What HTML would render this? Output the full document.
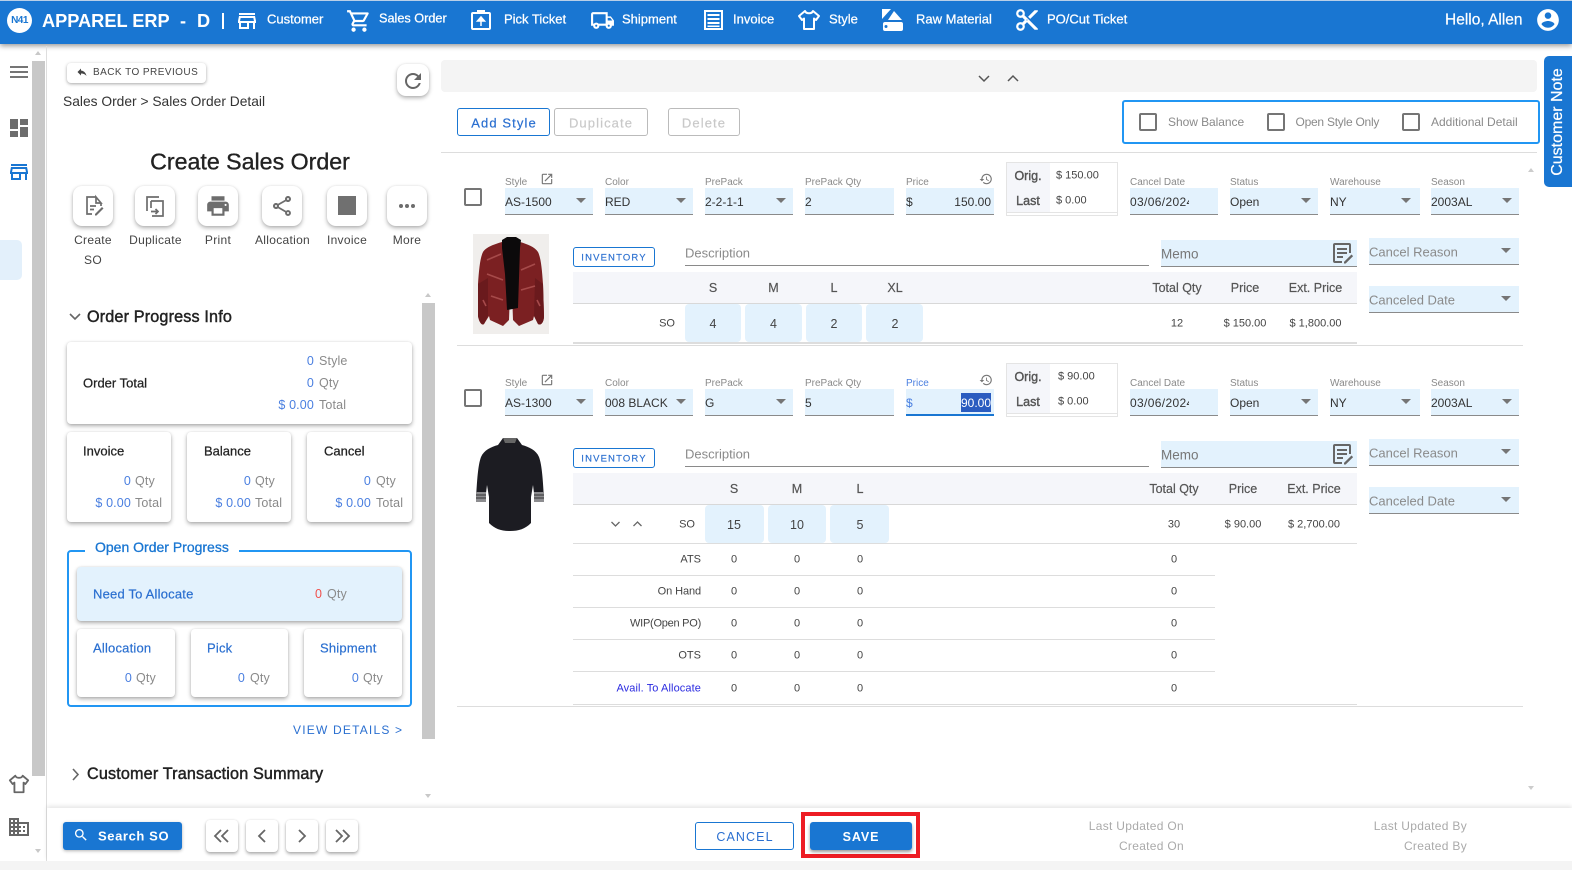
<!DOCTYPE html>
<html><head><meta charset="utf-8"><title>Apparel ERP</title>
<style>
html,body{margin:0;padding:0;background:#fff}
#p{position:relative;width:1572px;height:870px;overflow:hidden;background:#fff;font-family:"Liberation Sans",sans-serif;color:#333}
#p div,#p svg,#p span{position:absolute;box-sizing:border-box}
.t,.r,.c{white-space:nowrap;line-height:1}
.t{transform:translateY(-50%)}
.r{transform:translate(-100%,-50%)}
.c{transform:translate(-50%,-50%)}
.nav{color:#fff;font-size:13px;top:18.5px;-webkit-text-stroke:.25px #fff}
.card{background:#fff;border-radius:4px;box-shadow:0 2px 4px rgba(0,0,0,.32),0 0 2px rgba(0,0,0,.08)}
.ib{background:#fff;border-radius:9px;box-shadow:0 2px 4px rgba(0,0,0,.3),0 0 2px rgba(0,0,0,.08);top:186px;width:40px;height:40px}
.lb{font-size:12px;color:#444;letter-spacing:.3px}
.h1{font-size:16.2px;letter-spacing:.15px;color:#222;-webkit-text-stroke:.45px #222;margin-top:2px}
.b{color:#4a7fe0;font-size:12.5px;letter-spacing:.15px;margin-top:1px}
.g{color:#8a8a8a;font-size:12.5px;letter-spacing:.15px;margin-top:1px}
.bt{font-size:13px;color:#222;-webkit-text-stroke:.25px #222;margin-top:.5px}
.bl{font-size:13px;letter-spacing:.2px;color:#2a6fd0;-webkit-text-stroke:.2px #2a6fd0;margin-top:1px}
.f{background:#e3f2fd;border-bottom:1px solid #8a8a8a;height:27px}
.sl{font-size:10px;color:#8a8a8a;margin-top:1px}
.v{font-size:12px;color:#333}
.car{width:0;height:0;border-left:5.5px solid transparent;border-right:5.5px solid transparent;border-top:5.5px solid #757575}
.cb{width:18px;height:18px;border:2px solid #757575;border-radius:2px;background:#fff}
.cl{font-size:12px;color:#8a8a8a}
.th{background:#f5f6fa;border-bottom:1px solid #d8d8d8;left:573px;width:784px;height:32px}
.hd{font-size:12.5px;color:#555;-webkit-text-stroke:.2px #555}
.o{-webkit-text-stroke:.4px #555}
.cell{background:#e3f2fd;border-radius:4px}
.s{font-size:11px;color:#444;margin-top:1.5px}
.n{font-size:12.5px;color:#444}
.ln{background:#ddd;height:1px}
.ph{font-size:13px;color:#8a8a8a}
.nb{top:820px;width:32px;height:32px;background:#fff;border-radius:4px;box-shadow:0 2px 3px rgba(0,0,0,.3),0 0 2px rgba(0,0,0,.1)}
.ft{font-size:12px;color:#aaa;letter-spacing:.3px}
.btn{border-radius:3px;background:#fff;height:28px;top:108px;font-size:13px}
.dt{left:0;top:1px;white-space:nowrap;line-height:1;letter-spacing:.35px}
svg{overflow:visible}
</style></head><body>
<div id="p">
<svg width="0" height="0" style="left:0;top:0"><defs>
<symbol id="store" viewBox="0 0 24 24"><path d="M18.36 9l.6 3H5.04l.6-3h12.72M20 4H4v2h16V4zm0 3H4l-1 5v2h1v6h10v-6h4v6h2v-6h1v-2l-1-5zM6 18v-4h6v4H6z"/></symbol>
<symbol id="ext" viewBox="0 0 24 24"><path d="M19 19H5V5h7V3H5c-1.11 0-2 .9-2 2v14c0 1.1.89 2 2 2h14c1.1 0 2-.9 2-2v-7h-2v7zM14 3v2h3.59l-9.83 9.83 1.41 1.41L19 6.41V10h2V3h-7z"/></symbol>
<symbol id="hist" viewBox="0 0 24 24"><path d="M13 3c-4.97 0-9 4.03-9 9H1l3.89 3.89.07.14L9 12H6c0-3.87 3.13-7 7-7s7 3.13 7 7-3.13 7-7 7c-1.93 0-3.68-.79-4.94-2.06l-1.42 1.42C8.27 19.99 10.51 21 13 21c4.97 0 9-4.03 9-9s-4.03-9-9-9zm-1 5v5l4.28 2.54.72-1.21-3.5-2.08V8H12z"/></symbol>
<symbol id="note" viewBox="0 0 24 24"><path d="M5 2h14a2 2 0 0 1 2 2v8h-2V4H5v16h7v2H5a2 2 0 0 1-2-2V4a2 2 0 0 1 2-2zM7 7h10v2H7zM7 11h10v2H7zM7 15h6v2H7zM21.5 13.5l1.6 1.6-7.4 7.4H14v-1.6z"/></symbol>
<symbol id="shirt" viewBox="0 0 24 24"><path fill="none" stroke-width="2" stroke-linejoin="round" d="M8 3 L2 8 L5 12 L7 10.5 V21 H17 V10.5 L19 12 L22 8 L16 3 C15 6 9 6 8 3 Z"/></symbol>
</defs></svg>

<!-- header -->
<div style="left:0;top:0;width:1572px;height:44px;background:#1976d2;border-top:1px solid #b9cfe8;box-shadow:0 2px 5px rgba(0,0,0,.4)"></div>
<div style="left:7px;top:8px;width:25px;height:25px;border-radius:50%;background:#fff"></div>
<span class="c" style="left:19.5px;top:20.5px;font-size:10px;font-weight:700;color:#1976d2;letter-spacing:-.5px">N41</span>
<span class="t" style="left:42px;top:20.5px;font-size:18.2px;font-weight:700;color:#fff">APPAREL ERP</span>
<span class="t" style="left:180px;top:20.5px;font-size:18.2px;font-weight:700;color:#fff">-</span>
<span class="t" style="left:197px;top:20.5px;font-size:18.2px;font-weight:700;color:#fff">D</span>
<div style="left:221.5px;top:13px;width:2px;height:16px;background:#fff"></div>
<svg style="left:235px;top:9px" width="24" height="24" fill="#fff"><use href="#store"/></svg>
<span class="t nav" style="left:267px">Customer</span>
<svg style="left:346px;top:8px" width="26" height="26" viewBox="0 0 24 24" fill="#fff"><path d="M15.55 13c.75 0 1.41-.41 1.75-1.03l3.58-6.49c.37-.66-.11-1.48-.87-1.48H5.21l-.94-2H1v2h2l3.6 7.59-1.35 2.44C4.52 15.37 5.48 17 7 17h12v-2H7l1.1-2h7.45zM6.16 6h12.15l-2.76 5H8.53L6.16 6zM7 18c-1.1 0-1.99.9-1.99 2S5.9 22 7 22s2-.9 2-2-.9-2-2-2zm10 0c-1.1 0-1.99.9-1.99 2s.89 2 1.99 2 2-.9 2-2-.9-2-2-2z"/></svg>
<span class="t nav" style="left:379px;font-size:12.7px">Sales Order</span>
<svg style="left:471px;top:9px" width="20" height="21" viewBox="0 0 20 21" fill="none" stroke="#fff" stroke-width="2"><rect x="1" y="4" width="18" height="16" rx="1"/><path d="M7 4V2h6v2" /><path d="M10 17v-7M6.5 12L10 8l3.5 4z" fill="#fff" stroke-width="1.5"/></svg>
<span class="t nav" style="left:504px">Pick Ticket</span>
<svg style="left:590px;top:8px" width="25" height="25" viewBox="0 0 24 24" fill="#fff"><path d="M20 8h-3V4H3c-1.1 0-2 .9-2 2v11h2c0 1.66 1.34 3 3 3s3-1.34 3-3h6c0 1.66 1.34 3 3 3s3-1.34 3-3h2v-5l-3-4zm-.5 1.5l1.96 2.5H17V9.5h2.5zM6 18c-.55 0-1-.45-1-1s.45-1 1-1 1 .45 1 1-.45 1-1 1zm2.22-3c-.55-.61-1.33-1-2.22-1s-1.67.39-2.22 1H3V6h12v9H8.22zM18 18c-.55 0-1-.45-1-1s.45-1 1-1 1 .45 1 1-.45 1-1 1z"/></svg>
<span class="t nav" style="left:622px">Shipment</span>
<svg style="left:704px;top:10px" width="19" height="20" viewBox="0 0 19 20" fill="#fff"><path d="M0 0h19v20H0zM2 2v16h15V2z" fill-rule="evenodd"/><rect x="3.5" y="4" width="12" height="2"/><rect x="3.5" y="8" width="12" height="2"/><rect x="3.5" y="12" width="12" height="2"/><rect x="3.5" y="15.5" width="12" height="1.5"/></svg>
<span class="t nav" style="left:733px">Invoice</span>
<svg style="left:797px;top:8px" width="24" height="24" stroke="#fff"><use href="#shirt"/></svg>
<span class="t nav" style="left:829px">Style</span>
<svg style="left:882px;top:9px" width="21" height="22" viewBox="0 0 21 22" fill="#fff"><path d="M0 0h9L0 10z"/><path d="M12 2l8 9H6z"/><path d="M3 13h16a2 2 0 0 1 2 2v5a2 2 0 0 1-2 2H3a2 2 0 0 1-2-2v-5a2 2 0 0 1 2-2zm1 3a1.5 1.5 0 1 0 0 3 1.5 1.5 0 0 0 0-3z" fill-rule="evenodd"/></svg>
<span class="t nav" style="left:916px">Raw Material</span>
<svg style="left:1014px;top:7px" width="26" height="26" viewBox="0 0 24 24" fill="#fff"><path d="M9.64 7.64c.23-.5.36-1.05.36-1.64 0-2.21-1.79-4-4-4S2 3.79 2 6s1.79 4 4 4c.59 0 1.14-.13 1.64-.36L10 12l-2.36 2.36C7.14 14.13 6.59 14 6 14c-2.21 0-4 1.79-4 4s1.79 4 4 4 4-1.79 4-4c0-.59-.13-1.14-.36-1.64L12 14l7 7h3v-1L9.64 7.64zM6 8c-1.1 0-2-.89-2-2s.9-2 2-2 2 .89 2 2-.9 2-2 2zm0 12c-1.1 0-2-.89-2-2s.9-2 2-2 2 .89 2 2-.9 2-2 2zm6-7.5c-.28 0-.5-.22-.5-.5s.22-.5.5-.5.5.22.5.5-.22.5-.5.5zM19 3l-6 6 2 2 7-7V3h-3z"/></svg>
<span class="t nav" style="left:1047px">PO/Cut Ticket</span>
<span class="t" style="left:1445px;top:20px;font-size:15.5px;color:#fff;-webkit-text-stroke:.2px #fff">Hello, Allen</span>
<svg style="left:1535px;top:7px" width="26" height="26" viewBox="0 0 24 24" fill="#fff"><path d="M12 2C6.48 2 2 6.48 2 12s4.48 10 10 10 10-4.48 10-10S17.52 2 12 2zm0 3c1.66 0 3 1.34 3 3s-1.34 3-3 3-3-1.34-3-3 1.34-3 3-3zm0 14.2c-2.5 0-4.71-1.28-6-3.22.03-1.99 4-3.08 6-3.08 1.99 0 5.97 1.09 6 3.08-1.29 1.94-3.5 3.22-6 3.22z"/></svg>

<!-- left rail -->
<div style="left:32px;top:61px;width:13px;height:715px;background:#c8c8c8"></div>
<div style="left:46px;top:46px;width:1px;height:815px;background:#dedede"></div>
<div style="left:35px;top:51px;width:0;height:0;border-left:3.5px solid transparent;border-right:3.5px solid transparent;border-bottom:4px solid #c8c8c8"></div>
<div style="left:35px;top:849px;width:0;height:0;border-left:3.5px solid transparent;border-right:3.5px solid transparent;border-top:4px solid #c8c8c8"></div>
<div style="left:10px;top:66px;width:18px;height:2px;background:#757575"></div>
<div style="left:10px;top:71px;width:18px;height:2px;background:#757575"></div>
<div style="left:10px;top:76px;width:18px;height:2px;background:#757575"></div>
<svg style="left:7px;top:116px" width="24" height="24" viewBox="0 0 24 24" fill="#6d6d6d"><path d="M3 13h8V3H3v10zm0 8h8v-6H3v6zm10 0h8V11h-8v10zm0-18v6h8V3h-8z"/></svg>
<svg style="left:7px;top:160px" width="24" height="24" fill="#1976d2"><use href="#store"/></svg>
<div style="left:0;top:240px;width:22px;height:40px;background:#e3f0fb;border-radius:0 5px 5px 0"></div>
<svg style="left:8px;top:773px" width="22" height="22" stroke="#666"><use href="#shirt"/></svg>
<svg style="left:7px;top:815px" width="24" height="24" viewBox="0 0 24 24" fill="#666"><path d="M12 7V3H2v18h20V7H12zM6 19H4v-2h2v2zm0-4H4v-2h2v2zm0-4H4V9h2v2zm0-4H4V5h2v2zm4 12H8v-2h2v2zm0-4H8v-2h2v2zm0-4H8V9h2v2zm0-4H8V5h2v2zm10 12h-8v-2h2v-2h-2v-2h2v-2h-2V9h8v10zm-2-8h-2v2h2v-2zm0 4h-2v2h2v-2z"/></svg>

<!-- left panel top -->
<div style="left:67px;top:63px;width:139px;height:20px;background:#fff;border-radius:4px;box-shadow:0 1px 3px rgba(0,0,0,.35)"></div>
<svg style="left:76px;top:66px" width="12" height="12" viewBox="0 0 24 24" fill="#444"><path d="M10 9V5l-7 7 7 7v-4.1c5 0 8.5 1.6 11 5.1-1-5-4-10-11-11z"/></svg>
<span class="t" style="left:93px;top:73px;font-size:10px;letter-spacing:.45px;color:#444">BACK TO PREVIOUS</span>
<div class="ib" style="left:397px;top:64px;width:32px;height:32px"></div>
<svg style="left:401px;top:68.5px" width="24" height="24" viewBox="0 0 24 24" fill="#666"><path d="M17.65 6.35C16.2 4.9 14.21 4 12 4c-4.42 0-7.99 3.58-7.99 8s3.57 8 7.99 8c3.73 0 6.84-2.55 7.73-6h-2.08c-.82 2.33-3.04 4-5.65 4-3.31 0-6-2.69-6-6s2.69-6 6-6c1.66 0 3.14.69 4.22 1.78L13 11h7V4l-2.35 2.35z"/></svg>
<span class="t" style="left:63px;top:102px;font-size:13.8px;color:#333">Sales Order &gt; Sales Order Detail</span>
<span class="c" style="left:250px;top:162px;font-size:23.2px;color:#222;-webkit-text-stroke:.35px #222">Create Sales Order</span>

<div class="ib" style="left:73px"></div>
<svg style="left:83px;top:195px" width="22" height="22" viewBox="0 0 22 22" fill="none" stroke="#6d6d6d" stroke-width="1.7"><path d="M13 2H4v17h5M13 2l5 6h-5zM18 8v3"/><path d="M7 11h6M7 14.5h4"/><path d="M12 19l7-7 1.5 1.5-7 7H12z" fill="#6d6d6d" stroke="none"/></svg>
<div class="ib" style="left:135px"></div>
<svg style="left:144px;top:195px" width="22" height="22" viewBox="0 0 22 22" fill="none" stroke="#6d6d6d" stroke-width="1.7"><path d="M15 2H3v14"/><path d="M7 6h12v15H8"/><path d="M7 6v7M7 16.5h7M11.5 14l2.5 2.5-2.5 2.5"/></svg>
<div class="ib" style="left:198px"></div>
<svg style="left:205px;top:193px" width="26" height="26" viewBox="0 0 24 24" fill="#6d6d6d"><path d="M19 8H5c-1.66 0-3 1.34-3 3v6h4v4h12v-4h4v-6c0-1.66-1.34-3-3-3zm-3 11H8v-5h8v5zm3-7c-.55 0-1-.45-1-1s.45-1 1-1 1 .45 1 1-.45 1-1 1zm-1-9H6v4h12V3z"/></svg>
<div class="ib" style="left:262px"></div>
<svg style="left:270px;top:194px" width="24" height="24" viewBox="0 0 24 24" fill="#6d6d6d"><path d="M18 16.08c-.76 0-1.44.3-1.96.77L8.91 12.7c.05-.23.09-.46.09-.7s-.04-.47-.09-.7l7.05-4.11c.54.5 1.25.81 2.04.81 1.66 0 3-1.34 3-3s-1.34-3-3-3-3 1.34-3 3c0 .24.04.47.09.7L8.04 9.81C7.5 9.31 6.79 9 6 9c-1.66 0-3 1.34-3 3s1.34 3 3 3c.79 0 1.5-.31 2.04-.81l7.12 4.16c-.05.21-.08.43-.08.65 0 1.61 1.31 2.92 2.92 2.92 1.61 0 2.92-1.31 2.92-2.92s-1.31-2.92-2.92-2.92zM18 4c.55 0 1 .45 1 1s-.45 1-1 1-1-.45-1-1 .45-1 1-1zM6 13c-.55 0-1-.45-1-1s.45-1 1-1 1 .45 1 1-.45 1-1 1zm12 7.02c-.55 0-1-.45-1-1s.45-1 1-1 1 .45 1 1-.45 1-1 1z"/></svg>
<div class="ib" style="left:327px"></div>
<div style="left:338px;top:196px;width:18px;height:19px;background:#707070"></div>
<div class="ib" style="left:387px"></div>
<div style="left:399px;top:204px;width:4px;height:4px;border-radius:50%;background:#6d6d6d"></div>
<div style="left:405px;top:204px;width:4px;height:4px;border-radius:50%;background:#6d6d6d"></div>
<div style="left:411px;top:204px;width:4px;height:4px;border-radius:50%;background:#6d6d6d"></div>
<span class="c lb" style="left:93px;top:240px">Create</span><span class="c lb" style="left:93px;top:260px">SO</span>
<span class="c lb" style="left:155.5px;top:240px">Duplicate</span>
<span class="c lb" style="left:218px;top:240px">Print</span>
<span class="c lb" style="left:282.5px;top:240px">Allocation</span>
<span class="c lb" style="left:347px;top:240px">Invoice</span>
<span class="c lb" style="left:407px;top:240px">More</span>

<!-- panel scroll -->
<div style="left:422px;top:303px;width:13px;height:436px;background:#c8c8c8"></div>
<div style="left:425px;top:293px;width:0;height:0;border-left:3.5px solid transparent;border-right:3.5px solid transparent;border-bottom:4px solid #c8c8c8"></div>
<div style="left:425px;top:794px;width:0;height:0;border-left:3.5px solid transparent;border-right:3.5px solid transparent;border-top:4px solid #c8c8c8"></div>

<svg style="left:69px;top:312px" width="12" height="9" fill="none" stroke="#666" stroke-width="1.6"><path d="M1 2l5 5 5-5"/></svg>
<span class="t h1" style="left:87px;top:315px">Order Progress Info</span>

<div class="card" style="left:67px;top:342px;width:345px;height:82px"></div>
<span class="t bt" style="left:83px;top:382px">Order Total</span>
<span class="r b" style="left:314px;top:360px">0</span><span class="t g" style="left:319px;top:360px">Style</span>
<span class="r b" style="left:314px;top:382px">0</span><span class="t g" style="left:319px;top:382px">Qty</span>
<span class="r b" style="left:314px;top:404px">$ 0.00</span><span class="t g" style="left:319px;top:404px">Total</span>

<div class="card" style="left:67px;top:432px;width:104px;height:90px"></div>
<div class="card" style="left:187px;top:432px;width:104px;height:90px"></div>
<div class="card" style="left:307px;top:432px;width:105px;height:90px"></div>
<span class="t bt" style="left:83px;top:450px">Invoice</span>
<span class="t bt" style="left:204px;top:450px">Balance</span>
<span class="t bt" style="left:324px;top:450px">Cancel</span>
<span class="r b" style="left:131px;top:480px">0</span><span class="t g" style="left:135px;top:480px">Qty</span>
<span class="r b" style="left:131px;top:502px">$ 0.00</span><span class="t g" style="left:135px;top:502px">Total</span>
<span class="r b" style="left:251px;top:480px">0</span><span class="t g" style="left:255px;top:480px">Qty</span>
<span class="r b" style="left:251px;top:502px">$ 0.00</span><span class="t g" style="left:255px;top:502px">Total</span>
<span class="r b" style="left:371px;top:480px">0</span><span class="t g" style="left:376px;top:480px">Qty</span>
<span class="r b" style="left:371px;top:502px">$ 0.00</span><span class="t g" style="left:376px;top:502px">Total</span>

<div style="left:67px;top:550px;width:345px;height:157px;border:2px solid #2196f3;border-radius:4px"></div>
<div style="left:85px;top:546px;width:154px;height:8px;background:#fff"></div>
<span class="t" style="left:95px;top:547px;font-size:14px;color:#1976d2;-webkit-text-stroke:.3px #1976d2">Open Order Progress</span>
<div class="card" style="left:77px;top:567px;width:325px;height:54px;background:#e3f2fd"></div>
<span class="t bl" style="left:93px;top:593px">Need To Allocate</span>
<span class="t" style="left:315px;top:594px;font-size:12.5px;color:#f0504c">0</span><span class="t g" style="left:327px;top:593px">Qty</span>
<div class="card" style="left:77px;top:629px;width:98px;height:68px"></div>
<div class="card" style="left:191px;top:629px;width:97px;height:68px"></div>
<div class="card" style="left:304px;top:629px;width:98px;height:68px"></div>
<span class="t bl" style="left:93px;top:647px">Allocation</span>
<span class="t bl" style="left:207px;top:647px">Pick</span>
<span class="t bl" style="left:320px;top:647px">Shipment</span>
<span class="r b" style="left:132px;top:677px">0</span><span class="t g" style="left:136px;top:677px">Qty</span>
<span class="r b" style="left:245px;top:677px">0</span><span class="t g" style="left:250px;top:677px">Qty</span>
<span class="r b" style="left:359px;top:677px">0</span><span class="t g" style="left:363px;top:677px">Qty</span>
<span class="t" style="left:293px;top:730px;font-size:12px;letter-spacing:1.2px;color:#2a6fd0">VIEW DETAILS &gt;</span>
<svg style="left:71px;top:768px" width="9" height="13" fill="none" stroke="#666" stroke-width="1.6"><path d="M2 1l5 5.5-5 5.5"/></svg>
<span class="t h1" style="left:87px;top:772px">Customer Transaction Summary</span>

<!-- right panel top -->
<div style="left:441px;top:60px;width:1096px;height:32px;background:#f4f4f4;border-radius:4px"></div>
<svg style="left:978px;top:75px" width="12" height="7" fill="none" stroke="#555" stroke-width="1.5"><path d="M1 1l5 5 5-5"/></svg>
<svg style="left:1007px;top:75px" width="12" height="7" fill="none" stroke="#555" stroke-width="1.5"><path d="M1 6l5-5 5 5"/></svg>
<div class="btn" style="left:457px;width:93px;border:1.5px solid #1976d2"></div>
<span class="c" style="left:504px;top:122.5px;font-size:13px;letter-spacing:1.1px;color:#2a6fd0;-webkit-text-stroke:.2px #2a6fd0">Add Style</span>
<div class="btn" style="left:554px;width:94px;border:1px solid #bbb"></div>
<span class="c" style="left:601px;top:122.5px;font-size:13px;letter-spacing:1.1px;color:#c9c9c9;-webkit-text-stroke:.2px #c9c9c9">Duplicate</span>
<div class="btn" style="left:668px;width:72px;border:1px solid #bbb"></div>
<span class="c" style="left:704px;top:122.5px;font-size:13px;letter-spacing:1.1px;color:#c9c9c9;-webkit-text-stroke:.2px #c9c9c9">Delete</span>
<div style="left:441px;top:152px;width:1096px;height:1px;background:#ddd"></div>
<div style="left:1122px;top:100px;width:418px;height:44px;border:2px solid #2196f3;border-radius:3px"></div>
<div class="cb" style="left:1139px;top:113px"></div><span class="t cl" style="left:1168px;top:122px;letter-spacing:-.05px">Show Balance</span>
<div class="cb" style="left:1267px;top:113px"></div><span class="t cl" style="left:1295.5px;top:122px;letter-spacing:-.25px">Open Style Only</span>
<div class="cb" style="left:1402px;top:113px"></div><span class="t cl" style="left:1431px;top:122px">Additional Detail</span>
<div style="left:1544px;top:56px;width:28px;height:131px;background:#1976d2;border-radius:5px 0 0 5px"></div>
<span class="c" style="left:1558px;top:122px;font-size:16px;color:#fff;transform:translate(-50%,-50%) rotate(-90deg);-webkit-text-stroke:.2px #fff">Customer Note</span>
<div style="left:1528px;top:168px;width:0;height:0;border-left:3.5px solid transparent;border-right:3.5px solid transparent;border-bottom:4px solid #ccc"></div>
<div style="left:1528px;top:786px;width:0;height:0;border-left:3.5px solid transparent;border-right:3.5px solid transparent;border-top:4px solid #ccc"></div>

<!-- ROW 1 -->
<div class="cb" style="left:464px;top:188px"></div>
<span class="t sl" style="left:505px;top:182px">Style</span>
<svg style="left:540px;top:172px" width="14" height="14" fill="#777"><use href="#ext"/></svg>
<span class="t sl" style="left:605px;top:182px">Color</span>
<span class="t sl" style="left:705px;top:182px">PrePack</span>
<span class="t sl" style="left:805px;top:182px">PrePack Qty</span>
<span class="t sl" style="left:906px;top:182px">Price</span>
<svg style="left:979px;top:172px" width="14" height="14" fill="#777"><use href="#hist"/></svg>
<span class="t sl" style="left:1130px;top:182px">Cancel Date</span>
<span class="t sl" style="left:1230px;top:182px">Status</span>
<span class="t sl" style="left:1330px;top:182px">Warehouse</span>
<span class="t sl" style="left:1431px;top:182px">Season</span>
<div class="f" style="left:505px;top:188px;width:88px"></div><span class="t v" style="left:505px;top:201.5px">AS-1500</span><div class="car" style="left:575.5px;top:198px"></div>
<div class="f" style="left:605px;top:188px;width:88px"></div><span class="t v" style="left:605px;top:201.5px">RED</span><div class="car" style="left:675.5px;top:198px"></div>
<div class="f" style="left:705px;top:188px;width:88px"></div><span class="t v" style="left:705px;top:201.5px">2-2-1-1</span><div class="car" style="left:775.5px;top:198px"></div>
<div class="f" style="left:805px;top:188px;width:89px"></div><span class="t v" style="left:805px;top:201.5px">2</span>
<div class="f" style="left:906px;top:188px;width:88px"></div><span class="t v" style="left:906px;top:201.5px">$</span><span class="r v" style="left:991px;top:201.5px">150.00</span>
<div style="left:1006px;top:162px;width:112px;height:54px;border:1.5px solid #e4e4e4"></div>
<div style="left:1007px;top:163px;width:43px;height:49px;background:#f5f6fa"></div>
<div style="left:1007px;top:212px;width:110px;height:1px;background:#e4e4e4"></div>
<span class="c hd o" style="left:1028px;top:175.5px">Orig.</span>
<span class="c hd o" style="left:1028px;top:201px">Last</span>
<span class="t s" style="left:1056px;top:174px">$ 150.00</span>
<span class="t s" style="left:1056px;top:199px">$ 0.00</span>
<div class="f" style="left:1130px;top:188px;width:88px"></div><div style="left:1130px;top:195px;width:59px;height:15px;overflow:hidden"><span class="v dt">03/06/2024</span></div>
<div class="f" style="left:1230px;top:188px;width:88px"></div><span class="t v" style="left:1230px;top:201.5px">Open</span><div class="car" style="left:1301px;top:198px"></div>
<div class="f" style="left:1330px;top:188px;width:90px"></div><span class="t v" style="left:1330px;top:201.5px">NY</span><div class="car" style="left:1401px;top:198px"></div>
<div class="f" style="left:1431px;top:188px;width:88px"></div><span class="t v" style="left:1431px;top:201.5px">2003AL</span><div class="car" style="left:1502px;top:198px"></div>

<div style="left:473px;top:234px;width:76px;height:100px;background:#f0eeec"></div>
<svg style="left:473px;top:234px" width="76" height="100" viewBox="0 0 76 100">
<path d="M29 8 C22 10 13 13 10 18 C7 24 6 36 5 50 L5 82 C6 88 9 92 11 90 L16 82 L17 86 L30 92 L36 86 L38 30 L40 86 L46 92 L60 86 L61 82 L65 90 C68 92 71 88 71 82 L70 50 C69 36 68 24 65 18 C62 13 54 10 47 8 L38 14 Z" fill="#7b2022"/>
<path d="M5 50 L5 82 C6 88 9 92 11 90 L15 82 L15 44 Z M71 82 L70 50 L62 44 L61 82 L65 90 C68 92 71 88 71 82Z" fill="#6a1a1d"/>
<path d="M29 6 L34 3 H43 L48 6 L47 14 L45 74 L34 76 L32 40 L29 14Z" fill="#0c0a0b"/>
<path d="M14 26 L28 20 M14 40 L30 46 M48 36 L62 30 M48 56 L62 52 M18 62 L30 66 M10 66 L13 72 M64 66 L67 72" stroke="#a64a4a" stroke-width="1.6" fill="none"/>
</svg>
<div style="left:573px;top:247px;width:82px;height:20px;border:1.5px solid #1976d2;border-radius:3px"></div>
<span class="c" style="left:614px;top:257.5px;font-size:9.5px;letter-spacing:1.15px;color:#2a6fd0;-webkit-text-stroke:.15px #2a6fd0">INVENTORY</span>
<span class="t ph" style="left:685px;top:252.5px">Description</span>
<div style="left:685px;top:265px;width:464px;height:1px;background:#8a8a8a"></div>
<div class="f" style="left:1161px;top:240px;width:196px"></div><span class="t ph" style="left:1161px;top:254px;font-size:13.5px;color:#777">Memo</span>
<svg style="left:1330px;top:241px" width="24" height="24" fill="#666"><use href="#note"/></svg>
<div class="f" style="left:1369px;top:238px;width:150px"></div><span class="t ph" style="left:1369px;top:251.5px">Cancel Reason</span><div class="car" style="left:1501px;top:248px"></div>
<div class="f" style="left:1369px;top:286px;width:150px"></div><span class="t ph" style="left:1369px;top:300px">Canceled Date</span><div class="car" style="left:1501px;top:296px"></div>
<div class="th" style="top:272px"></div>
<span class="c hd" style="left:713px;top:288px">S</span><span class="c hd" style="left:773.5px;top:288px">M</span><span class="c hd" style="left:834px;top:288px">L</span><span class="c hd" style="left:895px;top:288px">XL</span>
<span class="c hd" style="left:1177px;top:287.5px">Total Qty</span><span class="c hd" style="left:1245px;top:287.5px">Price</span><span class="c hd" style="left:1315.5px;top:287.5px">Ext. Price</span>
<div class="cell" style="left:685px;top:304px;width:56px;height:38px"></div>
<div class="cell" style="left:745px;top:304px;width:57px;height:38px"></div>
<div class="cell" style="left:806px;top:304px;width:56px;height:38px"></div>
<div class="cell" style="left:866px;top:304px;width:57px;height:38px"></div>
<span class="c n" style="left:713px;top:323.5px">4</span><span class="c n" style="left:773.5px;top:323.5px">4</span><span class="c n" style="left:834px;top:323.5px">2</span><span class="c n" style="left:895px;top:323.5px">2</span>
<span class="r s" style="left:675px;top:322px">SO</span>
<span class="c s" style="left:1177px;top:322px">12</span><span class="c s" style="left:1245px;top:322px">$ 150.00</span><span class="c s" style="left:1315.5px;top:322px">$ 1,800.00</span>
<div style="left:573px;top:342px;width:784px;height:2px;background:#ddd"></div>
<div style="left:457px;top:345px;width:1066px;height:1px;background:#ddd"></div>

<!-- ROW 2 -->
<div class="cb" style="left:464px;top:389px"></div>
<span class="t sl" style="left:505px;top:383px">Style</span>
<svg style="left:540px;top:373px" width="14" height="14" fill="#777"><use href="#ext"/></svg>
<span class="t sl" style="left:605px;top:383px">Color</span>
<span class="t sl" style="left:705px;top:383px">PrePack</span>
<span class="t sl" style="left:805px;top:383px">PrePack Qty</span>
<span class="t sl" style="left:906px;top:383px;color:#4a7fe0">Price</span>
<svg style="left:979px;top:373px" width="14" height="14" fill="#777"><use href="#hist"/></svg>
<span class="t sl" style="left:1130px;top:383px">Cancel Date</span>
<span class="t sl" style="left:1230px;top:383px">Status</span>
<span class="t sl" style="left:1330px;top:383px">Warehouse</span>
<span class="t sl" style="left:1431px;top:383px">Season</span>
<div class="f" style="left:505px;top:389px;width:88px"></div><span class="t v" style="left:505px;top:402.5px">AS-1300</span><div class="car" style="left:575.5px;top:399px"></div>
<div class="f" style="left:605px;top:389px;width:88px"></div><span class="t v" style="left:605px;top:402.5px">008 BLACK</span><div class="car" style="left:675.5px;top:399px"></div>
<div class="f" style="left:705px;top:389px;width:88px"></div><span class="t v" style="left:705px;top:402.5px">G</span><div class="car" style="left:775.5px;top:399px"></div>
<div class="f" style="left:805px;top:389px;width:89px"></div><span class="t v" style="left:805px;top:402.5px">5</span>
<div class="f" style="left:906px;top:389px;width:88px;border-bottom:2px solid #1976d2"></div><span class="t v" style="left:906px;top:402.5px;color:#4a7fe0">$</span>
<div style="left:961px;top:393px;width:30px;height:19px;background:#2a5cc0"></div><span class="r v" style="left:991px;top:402.5px;color:#fff">90.00</span>
<div style="left:1006px;top:363px;width:112px;height:54px;border:1.5px solid #e4e4e4"></div>
<div style="left:1007px;top:364px;width:43px;height:49px;background:#f5f6fa"></div>
<div style="left:1007px;top:413px;width:110px;height:1px;background:#e4e4e4"></div>
<span class="c hd o" style="left:1028px;top:376.5px">Orig.</span>
<span class="c hd o" style="left:1028px;top:402px">Last</span>
<span class="t s" style="left:1058px;top:375px">$ 90.00</span>
<span class="t s" style="left:1058px;top:400px">$ 0.00</span>
<div class="f" style="left:1130px;top:389px;width:88px"></div><div style="left:1130px;top:396px;width:59px;height:15px;overflow:hidden"><span class="v dt">03/06/2024</span></div>
<div class="f" style="left:1230px;top:389px;width:88px"></div><span class="t v" style="left:1230px;top:402.5px">Open</span><div class="car" style="left:1301px;top:399px"></div>
<div class="f" style="left:1330px;top:389px;width:90px"></div><span class="t v" style="left:1330px;top:402.5px">NY</span><div class="car" style="left:1401px;top:399px"></div>
<div class="f" style="left:1431px;top:389px;width:88px"></div><span class="t v" style="left:1431px;top:402.5px">2003AL</span><div class="car" style="left:1502px;top:399px"></div>

<svg style="left:473px;top:437px" width="74" height="96" viewBox="0 0 74 96">
<path d="M25 8 L30 1 H44 L49 8 C56 10 63 13 66 20 C69 28 70 44 71 62 L62 64 L60 48 L58 60 L58 86 C52 92 46 94 37 94 C28 94 22 92 16 86 L16 60 L14 48 L12 64 L3 62 C4 44 5 28 8 20 C11 13 18 10 25 8 Z" fill="#1c1c22"/>
<path d="M3 55 h10 v10 h-10z M61 55 h10 v10 h-10z" fill="#8d8d90"/>
<path d="M3 58 h10 M3 61 h10 M61 58 h10 M61 61 h10" stroke="#333" stroke-width="1"/>
<path d="M30 1 H44 L42 6 H32Z" fill="#666"/>
</svg>
<div style="left:573px;top:448px;width:82px;height:20px;border:1.5px solid #1976d2;border-radius:3px"></div>
<span class="c" style="left:614px;top:458.5px;font-size:9.5px;letter-spacing:1.15px;color:#2a6fd0;-webkit-text-stroke:.15px #2a6fd0">INVENTORY</span>
<span class="t ph" style="left:685px;top:453.5px">Description</span>
<div style="left:685px;top:466px;width:464px;height:1px;background:#8a8a8a"></div>
<div class="f" style="left:1161px;top:441px;width:196px"></div><span class="t ph" style="left:1161px;top:455px;font-size:13.5px;color:#777">Memo</span>
<svg style="left:1330px;top:442px" width="24" height="24" fill="#666"><use href="#note"/></svg>
<div class="f" style="left:1369px;top:439px;width:150px"></div><span class="t ph" style="left:1369px;top:452.5px">Cancel Reason</span><div class="car" style="left:1501px;top:449px"></div>
<div class="f" style="left:1369px;top:487px;width:150px"></div><span class="t ph" style="left:1369px;top:501px">Canceled Date</span><div class="car" style="left:1501px;top:497px"></div>
<div class="th" style="top:473px"></div>
<span class="c hd" style="left:734px;top:489px">S</span><span class="c hd" style="left:797px;top:489px">M</span><span class="c hd" style="left:860px;top:489px">L</span>
<span class="c hd" style="left:1174px;top:489px">Total Qty</span><span class="c hd" style="left:1243px;top:489px">Price</span><span class="c hd" style="left:1314px;top:489px">Ext. Price</span>
<div class="cell" style="left:705px;top:505px;width:59px;height:38px"></div>
<div class="cell" style="left:768px;top:505px;width:58px;height:38px"></div>
<div class="cell" style="left:830px;top:505px;width:59px;height:38px"></div>
<span class="c n" style="left:734px;top:524.5px">15</span><span class="c n" style="left:797px;top:524.5px">10</span><span class="c n" style="left:860px;top:524.5px">5</span>
<svg style="left:611px;top:521px" width="9" height="6" fill="none" stroke="#666" stroke-width="1.3"><path d="M.5 1l4 4 4-4"/></svg>
<svg style="left:633px;top:521px" width="9" height="6" fill="none" stroke="#666" stroke-width="1.3"><path d="M.5 5l4-4 4 4"/></svg>
<span class="r s" style="left:695px;top:523px">SO</span>
<span class="c s" style="left:1174px;top:523px">30</span><span class="c s" style="left:1243px;top:523px">$ 90.00</span><span class="c s" style="left:1314px;top:523px">$ 2,700.00</span>
<div style="left:573px;top:543px;width:784px;height:1px;background:#ddd"></div>

<span class="r s" style="left:701px;top:558px">ATS</span>
<span class="r s" style="left:701px;top:590px;letter-spacing:-.1px">On Hand</span>
<span class="r s" style="left:701px;top:622px;letter-spacing:-.25px">WIP(Open PO)</span>
<span class="r s" style="left:701px;top:654px">OTS</span>
<span class="r s" style="left:701px;top:687px;color:#2a2ae0;letter-spacing:.1px">Avail. To Allocate</span>
<span class="c s" style="left:734px;top:558px">0</span><span class="c s" style="left:797px;top:558px">0</span><span class="c s" style="left:860px;top:558px">0</span><span class="c s" style="left:1174px;top:558px">0</span>
<span class="c s" style="left:734px;top:590px">0</span><span class="c s" style="left:797px;top:590px">0</span><span class="c s" style="left:860px;top:590px">0</span><span class="c s" style="left:1174px;top:590px">0</span>
<span class="c s" style="left:734px;top:622px">0</span><span class="c s" style="left:797px;top:622px">0</span><span class="c s" style="left:860px;top:622px">0</span><span class="c s" style="left:1174px;top:622px">0</span>
<span class="c s" style="left:734px;top:654px">0</span><span class="c s" style="left:797px;top:654px">0</span><span class="c s" style="left:860px;top:654px">0</span><span class="c s" style="left:1174px;top:654px">0</span>
<span class="c s" style="left:734px;top:687px">0</span><span class="c s" style="left:797px;top:687px">0</span><span class="c s" style="left:860px;top:687px">0</span><span class="c s" style="left:1174px;top:687px">0</span>
<div class="ln" style="left:573px;top:575px;width:642px"></div>
<div class="ln" style="left:573px;top:607px;width:642px"></div>
<div class="ln" style="left:573px;top:639px;width:642px"></div>
<div class="ln" style="left:573px;top:671px;width:642px"></div>
<div class="ln" style="left:573px;top:704px;width:784px"></div>
<div class="ln" style="left:457px;top:706px;width:1066px"></div>

<!-- footer -->
<div style="left:47px;top:808px;width:1525px;height:53px;background:#fff;box-shadow:0 -2px 4px rgba(0,0,0,.1)"></div>
<div style="left:0;top:861px;width:1572px;height:9px;background:#f4f4f4"></div>
<div style="left:63px;top:822px;width:119px;height:28px;background:#1976d2;border-radius:3px;box-shadow:0 1px 3px rgba(0,0,0,.3)"></div>
<svg style="left:73px;top:827px" width="16" height="16" viewBox="0 0 24 24" fill="#fff"><path d="M15.5 14h-.79l-.28-.27C15.41 12.59 16 11.11 16 9.5 16 5.91 13.09 3 9.5 3S3 5.91 3 9.5 5.91 16 9.5 16c1.61 0 3.09-.59 4.23-1.57l.27.28v.79l5 4.99L20.49 19l-4.99-5zm-6 0C7.01 14 5 11.99 5 9.5S7.01 5 9.5 5 14 7.01 14 9.5 11.99 14 9.5 14z"/></svg>
<span class="t" style="left:98px;top:836px;font-size:13px;font-weight:700;letter-spacing:.6px;color:#fff">Search SO</span>
<div class="nb" style="left:206px"></div>
<svg style="left:214px;top:829px" width="16" height="14" fill="none" stroke="#666" stroke-width="1.8"><path d="M7 1L1 7l6 6M14 1L8 7l6 6"/></svg>
<div class="nb" style="left:246px"></div>
<svg style="left:258px;top:829px" width="8" height="14" fill="none" stroke="#666" stroke-width="1.8"><path d="M7 1L1 7l6 6"/></svg>
<div class="nb" style="left:286px"></div>
<svg style="left:298px;top:829px" width="8" height="14" fill="none" stroke="#666" stroke-width="1.8"><path d="M1 1l6 6-6 6"/></svg>
<div class="nb" style="left:326px"></div>
<svg style="left:334px;top:829px" width="16" height="14" fill="none" stroke="#666" stroke-width="1.8"><path d="M2 1l6 6-6 6M9 1l6 6-6 6"/></svg>

<div style="left:695px;top:822px;width:99px;height:28px;border:1px solid #1976d2;border-radius:3px;background:#fff"></div>
<span class="c" style="left:745px;top:836.5px;font-size:12.5px;letter-spacing:1.1px;color:#2a6fd0">CANCEL</span>
<div style="left:801px;top:812px;width:119px;height:46px;border:4px solid #ed1c24"></div>
<div style="left:810px;top:822px;width:102px;height:28px;background:#1976d2;border-radius:3px;box-shadow:0 2px 3px rgba(0,0,0,.4)"></div>
<span class="c" style="left:861px;top:836.5px;font-size:12.5px;font-weight:700;letter-spacing:.9px;color:#fff">SAVE</span>
<span class="r ft" style="left:1184px;top:826px">Last Updated On</span>
<span class="r ft" style="left:1184px;top:846px">Created On</span>
<span class="r ft" style="left:1467px;top:826px">Last Updated By</span>
<span class="r ft" style="left:1467px;top:846px">Created By</span>
</div>
</body></html>
